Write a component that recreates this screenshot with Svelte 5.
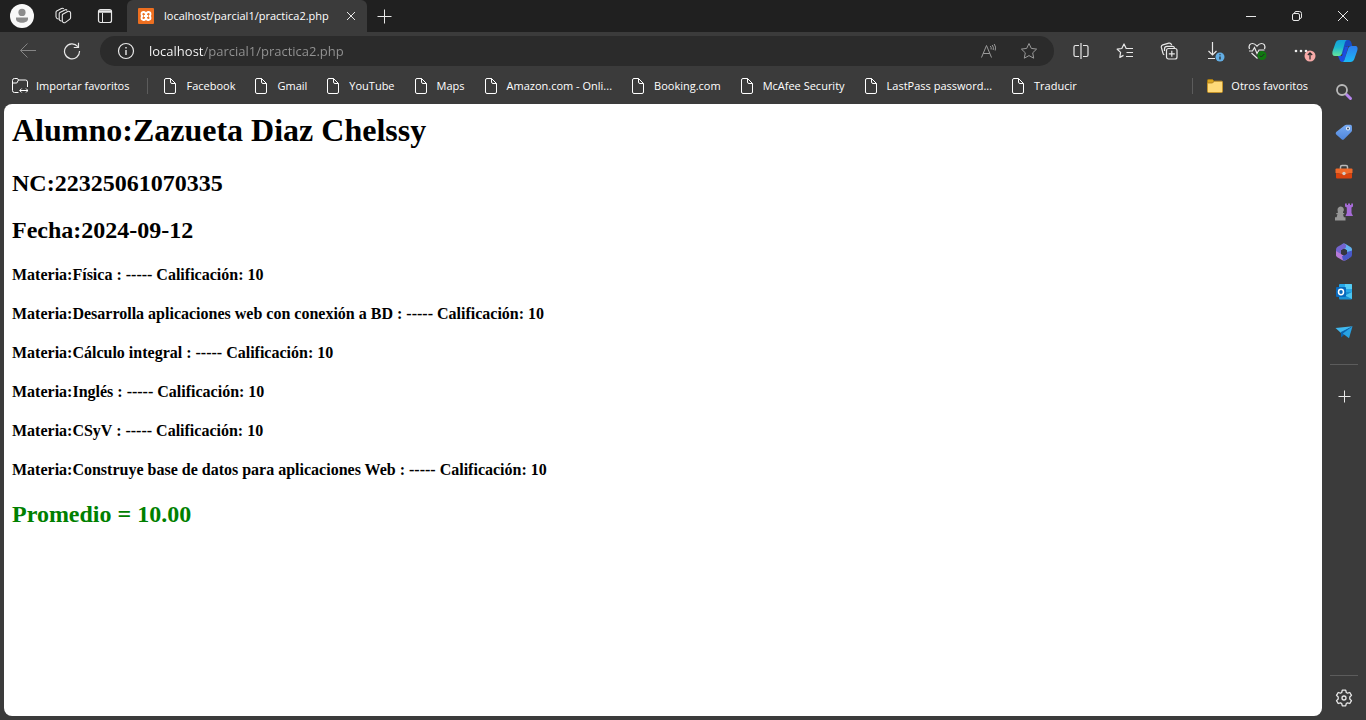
<script>
  const favorites = [
    'Facebook',
    'Gmail',
    'YouTube',
    'Maps',
    'Amazon.com - Onli...',
    'Booking.com',
    'McAfee Security',
    'LastPass password...',
    'Traducir'
  ];

  const subjects = [
    { name: 'Física', grade: 10 },
    { name: 'Desarrolla aplicaciones web con conexión a BD', grade: 10 },
    { name: 'Cálculo integral', grade: 10 },
    { name: 'Inglés', grade: 10 },
    { name: 'CSyV', grade: 10 },
    { name: 'Construye base de datos para aplicaciones Web', grade: 10 }
  ];

  const average = subjects.reduce((sum, s) => sum + s.grade, 0) / subjects.length;

  let address = $state('localhost/parcial1/practica2.php');
</script>

<div class="browser">
  <header class="tabs">
    <button class="avatar" aria-label="Perfil">
      <svg width="24" height="24" viewBox="0 0 24 24"><circle cx="12" cy="12" r="12" fill="#f8f8f8" /><circle cx="12" cy="8.4" r="3.6" fill="#8c8c8c" /><path d="M6 13.5h12v1.5c0 2.2-2.6 3.7-6 3.7s-6-1.5-6-3.7z" fill="#8c8c8c" /></svg>
    </button>
    <button class="tool narrow" aria-label="Áreas de trabajo">
      <svg class="line" width="18" height="18" viewBox="0 0 18 18"><path d="M8.700 7.300l5-2.800q1-.5 1.900 0t1 1.500v4.500q0 1-.8 1.600l-4.300 3.300q-1 .7-2 .2T8.300 14V8.200q0-.6.4-.9zM7.500 14.200q-2.300-.5-2.300-2.300V6.700q0-.8.700-1.200l5-2.600q1.300-.7 2.300.4M4.500 12.200Q2 11.600 2 9.800V5.200q0-.8.700-1.200l4.800-2.500q1.300-.7 2.300.3" stroke-width="1.100" /></svg>
    </button>
    <button class="tool narrow" aria-label="Pestañas verticales">
      <svg class="line" width="16" height="16" viewBox="0 0 16 16"><rect x="1.5" y="1.5" width="13" height="13" rx="2" stroke-width="1.200" /><path d="M5.500 5v9" /><path d="M2 3.500h12" stroke-width="2.500" /></svg>
    </button>
    <div class="tab">
      <svg width="16" height="16" viewBox="0 0 16 16"><rect width="16" height="16" rx="1" fill="#ed6f20" /><path d="M8 6.800Q7.600 4 5.600 4T3.500 6 5.300 8Q3.500 8.200 3.500 10T5.600 12 8 9.200M8 6.800Q8.400 4 10.400 4T12.500 6 10.700 8Q12.500 8.200 12.500 10T10.400 12 8 9.200M6 8h4" fill="none" stroke="#fff" stroke-width="1.800" /></svg>
      <span class="title">localhost/parcial1/practica2.php</span>
      <button class="close" aria-label="Cerrar pestaña"><svg class="line" width="10" height="10" viewBox="0 0 10 10"><path d="M1 1l8 8M9 1l-8 8" /></svg></button>
    </div>
    <button class="tool new" aria-label="Nueva pestaña"><svg class="line" width="15" height="15" viewBox="0 0 15 15"><path d="M7.5 .5v14M.5 7.5h14" /></svg></button>
    <div class="window">
      <button aria-label="Minimizar"><svg class="line" width="10" height="10" viewBox="0 0 10 10"><path d="M0 5.5h10" /></svg></button>
      <button aria-label="Restaurar"><svg class="line" width="10" height="10" viewBox="0 0 10 10"><rect x=".5" y="2.5" width="7" height="7" rx="1.5" /><path d="M2.5 2.2Q2.5 .5 4 .5h3.5q2 0 2 2V6q0 1.5-1.5 1.5" /></svg></button>
      <button aria-label="Cerrar"><svg class="line" width="10" height="10" viewBox="0 0 10 10"><path d="M0 0l10 10M10 0L0 10" /></svg></button>
    </div>
  </header>

  <nav class="toolbar">
    <button class="tool dim" aria-label="Atrás"><svg class="line" width="18" height="16" viewBox="0 0 18 16"><path d="M17 7.500H1.500M8.500 .5L1.500 7.500l7 7" /></svg></button>
    <button class="tool" aria-label="Actualizar"><svg class="line" width="18" height="18" viewBox="0 0 18 18"><path d="M14.800 4.600A7.500 7.500 0 1 0 16.500 9M15.500 .8v4.700h-4.700" stroke-width="1.200" /></svg></button>
    <div class="omnibox">
      <button class="info" aria-label="Información del sitio"><svg class="line" width="18" height="18" viewBox="0 0 18 18"><circle cx="9" cy="9" r="7.500" stroke-width="1.200" /><path d="M9 8v5M9 5v1.500" stroke-width="1.400" /></svg></button>
      <input type="text" aria-label="Dirección" bind:value={address} />
      <button class="inner" aria-label="Leer en voz alta"><svg class="line" width="18" height="18" viewBox="0 0 18 18"><path d="M1.500 15.500l5-12 5 12M3.200 11.500h6.600M10.300 4q1.300 1.500.8 3.500M12.200 3q1.800 2.200 1 5M14.200 2q2.200 3 1 6.500" /></svg></button>
      <button class="inner" aria-label="Agregar a favoritos"><svg class="line" width="18" height="18" viewBox="0 0 18 18"><path d="M9 1.500l2.300 4.900 5.300.7-3.900 3.700 1 5.400L9 13.600l-4.700 2.600 1-5.400L1.400 7.100l5.300-.7z" stroke-linejoin="round" /></svg></button>
    </div>
    <button class="tool" aria-label="Pantalla dividida"><svg class="line" width="18" height="18" viewBox="0 0 18 18"><path d="M9 1v16M7 3.500H3.500q-1.500 0-1.500 1.500v8q0 1.500 1.500 1.500H7M11 3.500h3.500q1.500 0 1.500 1.500v8q0 1.500-1.500 1.500H11" stroke-width="1.200" /></svg></button>
    <button class="tool" aria-label="Favoritos"><svg class="line" width="18" height="18" viewBox="0 0 18 18"><path d="M11 6.500h-.8L8 2 5.800 6.500l-4.600.7 3.400 3.200-.8 5 3.700-2M11 6.500h6M10.500 10.500H17M10 14.500h7" stroke-width="1.200" stroke-linejoin="round" /></svg></button>
    <button class="tool" aria-label="Colecciones"><svg class="line" width="18" height="18" viewBox="0 0 18 18"><rect x="6.500" y="6.500" width="10.500" height="10.500" rx="2" stroke-width="1.200" /><path d="M11.800 8.800v6M8.800 11.800h6M4.300 12.800q-1-.4-1.300-1.500L1.400 5.500q-.5-2 1.400-2.600l6-1.700q2-.5 2.600 1.300l.2.700M4.500 9V7q0-2.700 2.500-2.700h5.500q1.700 0 2 1.700" stroke-width="1.200" /></svg></button>
    <button class="tool" aria-label="Descargas"><svg class="line" width="24" height="22" viewBox="0 0 24 22"><path d="M11.500 2v13M7.500 11l4 4 4-4M7 18.500h7" stroke-width="1.200" /><circle cx="19" cy="17" r="4.500" fill="#63aee4" stroke="none" /><path d="M19 16.500v3M19 14.200v1" stroke="#222" stroke-width="1.200" /></svg></button>
    <button class="tool" aria-label="Rendimiento"><svg class="line" width="20" height="20" viewBox="0 0 20 20"><path d="M2.500 8C1.300 4.500 3 2.500 5.500 2.500S9 4 10 5.200c1-1.200 2-2.700 4.500-2.700S18.700 4.500 17.500 8M4.500 12l6 5.500M2 10h3.500l2-3.500 2.500 6 2-3.500h5.500" stroke-width="1.200" /><circle cx="15" cy="14.500" r="4.500" fill="#107710" stroke="none" /><path d="M12.800 14.500l1.500 1.500 3-3" stroke="#252525" /></svg></button>
    <button class="tool" aria-label="Configuración y más"><svg width="30" height="22" viewBox="0 0 30 22"><g fill="#eee"><circle cx="10" cy="11" r="1.300" /><circle cx="15" cy="11" r="1.300" /><circle cx="20" cy="11" r="1.300" /></g><circle cx="24" cy="16" r="5.500" fill="#f6aaa8" /><path d="M24 19.500v-6.500M21.800 15l2.200-2.200 2.200 2.200" fill="none" stroke="#282828" stroke-width="1.200" /></svg></button>
    <button class="copilot" aria-label="Copilot">
      <svg width="26" height="26" viewBox="0 0 26 26">
        <defs>
          <linearGradient id="cpA" x2="0" y2="1"><stop stop-color="#159ed9" /><stop offset=".45" stop-color="#1bb6cf" /><stop offset="1" stop-color="#65e59b" /></linearGradient>
          <linearGradient id="cpB" x2="0" y2="1"><stop stop-color="#2d7cf0" /><stop offset="1" stop-color="#1bb9f4" /></linearGradient>
        </defs>
        <path d="M12 2h4c2.500 0 3 1.500 3.500 3l.8 3H16c-2 0-3 1-3.500 3L11 16H8z" fill="#174bc4" />
        <path d="M7.500 2H15c-1.500.5-2 2-2.500 4L10 15c-.5 2-1.300 3-3 3H3c-2.500 0-3-2-2.500-4.500L3.500 5C4.200 3 5.500 2 7.500 2z" fill="url(#cpA)" />
        <path d="M6 18h4l3-9 3.500-1-3.500 12c-.5 3-1 4-2.800 4-1.500 0-2.200-1-2.700-2.500z" fill="#1b4de0" />
        <path d="M19.500 8H23c2.500 0 3 2 2.300 4.500l-3 8.500c-.7 2-2 3-4 3H10.500c1.500-.5 2-2 2.500-4l3-9c.5-2 1.500-3 3.500-3z" fill="url(#cpB)" />
      </svg>
    </button>
  </nav>

  <div class="body">
    <div class="left">
      <nav class="favorites">
        <a href="#importar"><svg class="line" width="16" height="16" viewBox="0 0 16 16"><path d="M6.500 14.500h-4q-2 0-2-2v-10q0-2 2-2H5q1 0 1.500 1.500h7q2 0 2 2V9M.5 5h4.300L6.500 2M8 12.500h8M9.700 10.500l-2 2 2 2M14 10.500l2 2-2 2" /></svg><span>Importar favoritos</span></a>
        <i class="bar"></i>
        {#each favorites as name}
          <a href="#{name}"><svg class="line" width="16" height="16" viewBox="0 0 16 16"><path d="M8.500 .5H4q-1.500 0-1.500 1.500v12q0 1.500 1.500 1.500h8q1.500 0 1.500-1.500V5.500zM8.500 .5V4q0 1.500 1.500 1.500h3.500" /></svg><span>{name}</span></a>
        {/each}
        <i class="bar end"></i>
        <a href="#otros"><svg width="16" height="16" viewBox="0 0 16 16"><path d="M.5 2.500q0-1 1-1h4l1.500 1.500L5.500 5H.5z" fill="#d9a520" stroke="#a87b13" /><path d="M.5 5h5L7.200 3.200H14.500q1 0 1 1v9.300q0 1-1 1h-13q-1 0-1-1z" fill="#ffda79" stroke="#c4932b" /></svg><span>Otros favoritos</span></a>
      </nav>
      <main>
        <h1>Alumno:Zazueta Diaz Chelssy</h1>
        <h2>NC:22325061070335</h2>
        <h2>Fecha:2024-09-12</h2>
        <section>
          {#each subjects as subject}
            <h4>Materia:{subject.name} : ----- Calificación: {subject.grade}</h4>
          {/each}
        </section>
        <h2 class="average">Promedio = {average.toFixed(2)}</h2>
      </main>
    </div>

    <aside>
      <button aria-label="Buscar"><svg width="18" height="18" viewBox="0 0 18 18"><path d="M11.500 11.500l4 4" stroke="#b585ec" stroke-width="3" stroke-linecap="round" /><circle cx="7" cy="7" r="5" fill="none" stroke="#b9b9b9" stroke-width="1.800" /></svg></button>
      <button aria-label="Compras"><svg width="18" height="18" viewBox="0 0 18 18"><defs><linearGradient id="tag" x2="0" y2="1"><stop stop-color="#77aaf2" /><stop offset="1" stop-color="#4f86dc" /></linearGradient></defs><path d="M9.500 2.500q.8-.8 2-.8l4 .1q1.300.1 1.400 1.400l.1 4.100q0 1-.8 1.800l-7.200 7.200q-1.200 1.100-2.400 0L1.200 11.500q-1.100-1.200 0-2.400z" fill="url(#tag)" /><circle cx="13" cy="5.500" r="2" fill="#eef4fc" /><circle cx="13" cy="5.500" r="1" fill="#39485f" /></svg></button>
      <button aria-label="Herramientas"><svg width="18" height="18" viewBox="0 0 18 18"><path d="M5.500 6V4q0-1.500 1.500-1.500h4q1.500 0 1.500 1.500v2" fill="none" stroke="#b8b8b8" stroke-width="1.500" /><path d="M1.500 5.500h15q1 0 1 1V10l-8.500 1.500L.5 10V6.500q0-1 1-1z" fill="#f06a2a" /><path d="M1 10l8 1.500L17 10v4.500q0 1-1 1H2q-1 0-1-1z" fill="#d9430e" /><circle cx="9" cy="10.500" r="1.700" fill="#d5cdc8" /></svg></button>
      <button aria-label="Juegos"><svg width="18" height="18" viewBox="0 0 18 18"><path d="M10 .5h1.800V2H13V.5h2V2h1.200V.5H18v3l-1.500 1v5.500l1.500 3h-7.500l1.300-3V4.500L10 3.500z" fill="#a66bd7" /><path d="M2.500 7a3.200 3.200 0 1 1 5.500 1.900V10h1.200v1.300H8l.9 3h1.600V17.500H0v-3.200h1.600l.9-3H1.300V10h1.500V8.900z" fill="#969696" /></svg></button>
      <button aria-label="Microsoft 365"><svg width="18" height="18" viewBox="0 0 18 18"><path d="M7 1.200q2-1.200 4 0l4.500 2.700Q17 4.800 17 6.500v5l-5-2.700V7.200L6.500 4z" fill="#62b1ef" /><path d="M7.500 .9L2.600 3.800Q1 4.800 1 6.800V13l5-1V7.500l5-3V2Q9 0 7.500 .9z" fill="#7464cf" /><path d="M1 8v3.800q0 1.600 1.300 2.400l4.700 2.700q2 1.200 4 0l3-1.700L6 11z" fill="#b67ad8" /><path d="M17 7.500v4.300q0 1.600-1.300 2.400L11 16.900q-1.500.8-3 .4l-1-4 5-2.500V9z" fill="#4858c8" /><path d="M9 5.800l3 1.700v3.200l-3 1.700-3-1.700V7.500z" fill="#353540" /></svg></button>
      <button aria-label="Outlook"><svg width="18" height="18" viewBox="0 0 18 18"><rect x="4" y="1" width="13" height="9" rx="1" fill="#25a7e8" /><path d="M10 1h6q1 0 1 1v4h-7z" fill="#55cdf5" /><path d="M4 9h13v6.500q0 1-1 1H5q-1 0-1-1z" fill="#168fd4" /><path d="M17 9v7L10 12.500z" fill="#4ac5f1" /><rect x="1" y="4" width="10" height="10" rx="1" fill="#0869bd" /><ellipse cx="6" cy="9" rx="2.500" ry="2.700" fill="none" stroke="#fff" stroke-width="1.500" /></svg></button>
      <button aria-label="Drop"><svg width="18" height="18" viewBox="0 0 18 18"><path d="M.5 5L17.500 3.200 6 10z" fill="#40b9ef" /><path d="M17.500 3.200L6 9v5.500l3-2.500z" fill="#0b62ae" /><path d="M17.500 3.200L7.800 10.500l6.200 4.800z" fill="#27a2e3" /></svg></button>
      <hr class="after-apps" />
      <button aria-label="Personalizar"><svg class="line" width="13" height="13" viewBox="0 0 13 13"><path d="M6.500 .5v12M.5 6.500h12" /></svg></button>
      <hr class="before-settings" />
      <button aria-label="Configuración"><svg class="line" width="18" height="18" viewBox="0 0 18 18"><path d="M7.300 1.200h3.400l.6 2.300 1.200.7 2.300-.7 1.700 2.900L14.800 8v2l1.700 1.600-1.700 2.900-2.300-.7-1.200.7-.6 2.300H7.300l-.6-2.300-1.200-.7-2.300.7-1.700-2.900L3.200 10V8L1.500 6.400l1.700-2.900 2.300.7 1.200-.7z" stroke-width="1.300" stroke-linejoin="round" /><circle cx="9" cy="9" r="2" stroke-width="1.300" /></svg></button>
    </aside>
  </div>
</div>

<style>
  :global(body) {
    margin: 0;
    background: #3b3b3b;
  }
  .browser {
    display: flex;
    flex-direction: column;
    min-height: 100vh;
    background: #3b3b3b;
    color: #fff;
    font-family: "Segoe UI", "Open Sans", sans-serif;
    font-size: 11px;
    line-height: 16px;
  }
  button {
    display: flex;
    align-items: center;
    justify-content: center;
    flex: none;
    padding: 0;
    border: 0;
    background: none;
    color: #e8e8e8;
  }
  svg {
    flex: none;
  }
  .line {
    fill: none;
    stroke: currentColor;
  }
  .tabs {
    display: flex;
    height: 32px;
    background: #202020;
  }
  .avatar {
    width: 42px;
    padding-left: 2px;
  }
  .tool {
    width: 44px;
  }
  .narrow {
    width: 42px;
  }
  .tab {
    display: flex;
    align-items: center;
    box-sizing: border-box;
    width: 240px;
    margin-left: 1px;
    padding: 0 10px 0 11px;
    border-radius: 6px 6px 0 0;
    background: #3b3b3b;
  }
  .title {
    flex: 1;
    margin-left: 10px;
    white-space: nowrap;
  }
  .close {
    width: 12px;
    height: 16px;
  }
  .new {
    width: 35px;
  }
  .window {
    display: flex;
    margin-left: auto;
  }
  .window button {
    width: 46px;
  }
  .toolbar {
    display: flex;
    height: 38px;
    padding-left: 6px;
  }
  .dim {
    color: #858585;
  }
  .omnibox {
    display: flex;
    align-items: center;
    flex: 1;
    height: 30px;
    margin: 4px 5px 4px 6px;
    padding-right: 5px;
    border-radius: 15px;
    background: #2b2b2b;
  }
  .info {
    width: 49px;
    padding-left: 2px;
  }
  input {
    flex: 1;
    min-width: 0;
    padding: 0;
    border: 0;
    outline: 0;
    background: linear-gradient(90deg, #fff 55px, #949494 55px);
    background-clip: text;
    color: transparent;
    font: 13px/20px "Segoe UI", "Open Sans", sans-serif;
  }
  .inner {
    width: 40px;
    color: #9a9a9a;
  }
  .copilot {
    width: 43px;
  }
  .body {
    display: flex;
    flex: 1;
  }
  .left {
    display: flex;
    flex-direction: column;
    flex: 1;
    min-width: 0;
    padding: 0 0 4px 4px;
  }
  .favorites {
    display: flex;
    align-items: center;
    gap: 18px;
    height: 32px;
    margin-bottom: 2px;
    padding: 0 14px 0 8px;
  }
  .favorites a {
    display: flex;
    align-items: center;
    gap: 8px;
    color: #fff;
    text-decoration: none;
    white-space: nowrap;
  }
  .bar {
    width: 1px;
    height: 16px;
    margin-right: -4px;
    background: #5c5c5c;
  }
  .end {
    margin-left: auto;
  }
  main {
    flex: 1;
    padding: 8px;
    border-radius: 8px;
    background: #fff;
    color: #000;
    font-family: "Liberation Serif", serif;
  }
  h1 {
    margin: 0 0 21px;
    font-size: 32px;
    line-height: 37px;
  }
  h2 {
    margin: 20px 0;
    font-size: 24px;
    line-height: 27px;
  }
  section {
    display: grid;
    gap: 21px;
    margin: 22px 0;
  }
  h4 {
    margin: 0;
    font-size: 16px;
    line-height: 18px;
  }
  .average {
    color: #008000;
  }
  aside {
    display: flex;
    flex-direction: column;
    align-items: center;
    width: 44px;
    padding: 2px 0;
  }
  aside button {
    width: 40px;
    height: 40px;
  }
  hr {
    width: 28px;
    height: 1px;
    border: 0;
    background: #5c5c5c;
  }
  .after-apps {
    margin: 12px 0 11px;
  }
  .before-settings {
    margin: auto 0 2px;
  }
</style>
